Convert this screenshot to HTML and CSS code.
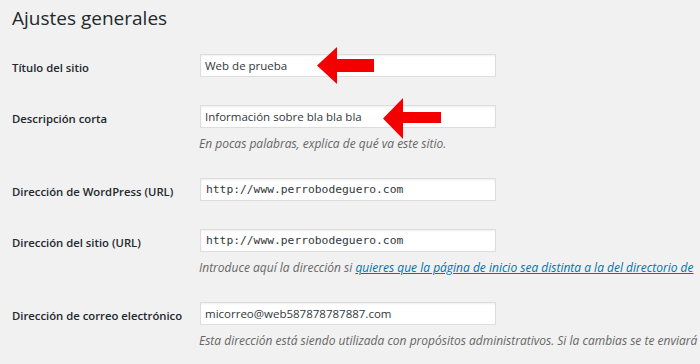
FILE: index.html
```html
<!DOCTYPE html>
<html lang="es">
<head>
<meta charset="utf-8">
<title>Ajustes generales</title>
<link rel="stylesheet" href="styles.css">
</head>
<body>
<main class="wrap">
  <h1 class="title">Ajustes generales</h1>
  <div class="form">
    <div class="row">
      <div class="th">Título del sitio</div>
      <div class="td">
        <div class="field">
          <div class="input">Web de prueba</div>
          <svg class="arrow arrow-1" width="57" height="37" viewBox="0 0 57 37"><path d="M0 18.5 L20 0 L20 12 L57 12 L57 25 L20 25 L20 37 Z" fill="#f50000"/></svg>
        </div>
      </div>
    </div>
    <div class="row">
      <div class="th">Descripción corta</div>
      <div class="td">
        <div class="field">
          <div class="input">Información sobre bla bla bla</div>
          <svg class="arrow arrow-2" width="58" height="41" viewBox="0 0 58 41"><path d="M0 20.5 L20 0 L20 14 L58 14 L58 25 L20 25 L20 41 Z" fill="#f50000"/></svg>
        </div>
        <p class="desc">En pocas palabras, explica de qué va este sitio.</p>
      </div>
    </div>
    <div class="row">
      <div class="th">Dirección de WordPress (URL)</div>
      <div class="td">
        <div class="field">
          <div class="input mono">http://www.perrobodeguero.com</div>
        </div>
      </div>
    </div>
    <div class="row">
      <div class="th">Dirección del sitio (URL)</div>
      <div class="td">
        <div class="field">
          <div class="input mono">http://www.perrobodeguero.com</div>
        </div>
        <p class="desc">Introduce aquí la dirección si <a href="#">quieres que la página de inicio sea distinta a la del directorio de</a></p>
      </div>
    </div>
    <div class="row">
      <div class="th">Dirección de correo electrónico</div>
      <div class="td">
        <div class="field">
          <div class="input">micorreo@web587878787887.com</div>
        </div>
        <p class="desc">Esta dirección está siendo utilizada con propósitos administrativos. Si la cambias se te enviará</p>
      </div>
    </div>
  </div>
</main>
</body>
</html>
```

FILE: styles.css
```css
html, body {
  margin: 0;
  padding: 0;
  background: #f1f1f1;
  overflow: hidden;
}

body {
  font-family: "Open Sans", "Noto Sans", sans-serif;
  color: #23282d;
  width: 700px;
  height: 364px;
}

.wrap {
  padding: 5px 0 0 12px;
}

.title {
  margin: 0 0 8px;
  font-size: 19px;
  line-height: 27px;
  font-weight: 400;
  color: #23282d;
}

.row {
  display: grid;
  grid-template-columns: 188px 1fr;
  padding: 14px 0;
}

.th {
  padding-top: 5px;
  font-size: 11.3px;
  line-height: 18px;
  font-weight: 600;
  white-space: nowrap;
}

.td {
  min-width: 0;
}

.field {
  position: relative;
  width: 296px;
}

.input {
  box-sizing: border-box;
  height: 23px;
  padding: 0 4px;
  background: #fff;
  border: 1px solid #ddd;
  box-shadow: inset 0 1px 2px rgba(0, 0, 0, 0.07);
  font-size: 11.5px;
  line-height: 21px;
  color: #32373c;
  white-space: nowrap;
}

.mono {
  padding-left: 5px;
  font-family: "DejaVu Sans Mono", "Liberation Mono", monospace;
  font-size: 11.3px;
}

.arrow {
  position: absolute;
  top: -7px;
  display: block;
}

.arrow-1 {
  left: 117px;
}

.arrow-2 {
  left: 183px;
}

.desc {
  margin: 7px 0 -2px -1px;
  font-size: 12px;
  line-height: 17px;
  font-style: italic;
  color: #666;
  white-space: nowrap;
}

.desc a {
  color: #0073aa;
  text-decoration: underline;
}
```
